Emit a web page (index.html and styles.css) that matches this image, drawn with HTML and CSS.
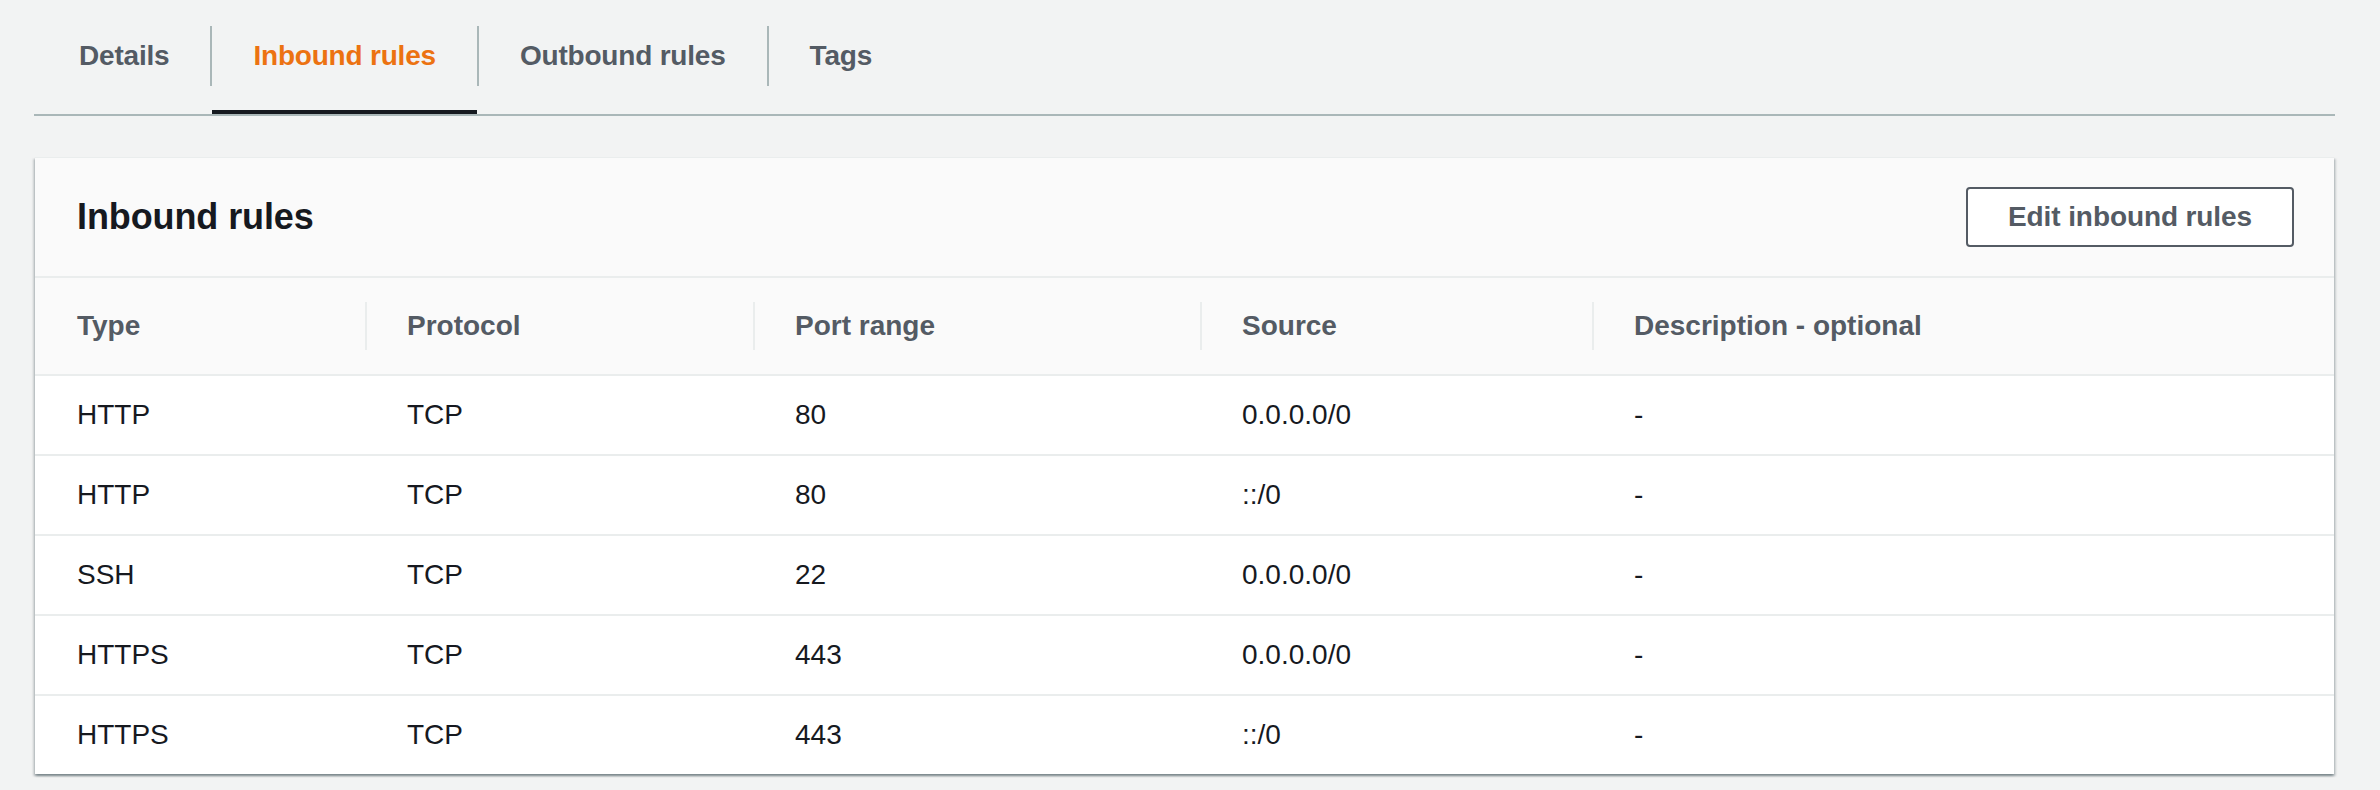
FILE: index.html
```html
<!DOCTYPE html>
<html lang="en">
<head>
<meta charset="utf-8">
<title>Inbound rules</title>
<link rel="stylesheet" href="styles.css">
</head>
<body>
<div class="page">
  <nav class="tabs">
    <div class="tab">Details</div>
    <span class="tab-sep"></span>
    <div class="tab active">Inbound rules</div>
    <span class="tab-sep"></span>
    <div class="tab">Outbound rules</div>
    <span class="tab-sep"></span>
    <div class="tab">Tags</div>
  </nav>

  <section class="panel">
    <header class="panel-head">
      <h2 class="panel-title">Inbound rules</h2>
      <button class="btn">Edit inbound rules</button>
    </header>
    <div class="table">
      <div class="row row-head">
        <div class="cell"><span class="col-label first">Type</span></div>
        <div class="cell"><span class="col-label">Protocol</span></div>
        <div class="cell"><span class="col-label">Port range</span></div>
        <div class="cell"><span class="col-label">Source</span></div>
        <div class="cell"><span class="col-label">Description - optional</span></div>
      </div>
      <div class="row">
        <div class="cell">HTTP</div><div class="cell">TCP</div><div class="cell">80</div><div class="cell">0.0.0.0/0</div><div class="cell">-</div>
      </div>
      <div class="row">
        <div class="cell">HTTP</div><div class="cell">TCP</div><div class="cell">80</div><div class="cell">::/0</div><div class="cell">-</div>
      </div>
      <div class="row">
        <div class="cell">SSH</div><div class="cell">TCP</div><div class="cell">22</div><div class="cell">0.0.0.0/0</div><div class="cell">-</div>
      </div>
      <div class="row">
        <div class="cell">HTTPS</div><div class="cell">TCP</div><div class="cell">443</div><div class="cell">0.0.0.0/0</div><div class="cell">-</div>
      </div>
      <div class="row">
        <div class="cell">HTTPS</div><div class="cell">TCP</div><div class="cell">443</div><div class="cell">::/0</div><div class="cell">-</div>
      </div>
    </div>
  </section>
</div>
</body>
</html>
```

FILE: styles.css
```css
* {
  box-sizing: border-box;
}

html, body {
  margin: 0;
  padding: 0;
  background: #f2f3f3;
}

body {
  font-family: "Liberation Sans", Arial, sans-serif;
  color: #16191f;
  width: 2380px;
  height: 790px;
  overflow: hidden;
}

.page {
  padding: 0 45px 0 34px;
}

/* Tabs */
.tabs {
  display: flex;
  align-items: flex-start;
  padding-top: 26px;
  border-bottom: 2px solid #aab7b8;
}

.tab {
  box-sizing: content-box;
  height: 60px;
  padding: 0 41px 24px;
  border-bottom: 4px solid transparent;
  display: flex;
  align-items: center;
  font-size: 28px;
  font-weight: 700;
  letter-spacing: -0.2px;
  color: #545b64;
  white-space: nowrap;
}

.tab:first-child {
  padding-left: 45px;
}

.tab.active {
  color: #ec7211;
  border-bottom-color: #16191f;
}

.tab-sep {
  flex: none;
  width: 2px;
  height: 60px;
  background: #aab7b8;
}

/* Panel */
.panel {
  margin: 41px 1px 0;
  background: #ffffff;
  border-top: 1px solid #eaeded;
  box-shadow: 0 2px 2px 0 rgba(0, 28, 36, 0.3),
              2px 2px 2px 0 rgba(0, 28, 36, 0.15),
              -2px 2px 2px 0 rgba(0, 28, 36, 0.15);
}

.panel-head {
  height: 120px;
  display: flex;
  align-items: center;
  justify-content: space-between;
  padding: 0 40px 0 42px;
  background: #fafafa;
  border-bottom: 2px solid #eaeded;
}

.panel-title {
  margin: 0;
  font-size: 36px;
  font-weight: 700;
  letter-spacing: -0.1px;
  color: #16191f;
}

.btn {
  height: 60px;
  padding: 0 40px;
  border: 2px solid #545b64;
  border-radius: 4px;
  background: #ffffff;
  font-family: "Liberation Sans", Arial, sans-serif;
  font-size: 28px;
  font-weight: 700;
  letter-spacing: -0.1px;
  color: #545b64;
}

/* Table */
.row {
  display: grid;
  grid-template-columns: 330px 388px 447px 392px 1fr;
  height: 80px;
  border-bottom: 2px solid #eaeded;
  background: #ffffff;
}

.row:last-child {
  border-bottom: none;
  height: 78px;
}

.row-head {
  height: 98px;
  background: #fafafa;
}

.cell {
  display: flex;
  align-items: center;
  padding-left: 42px;
  font-size: 28px;
  color: #16191f;
  white-space: nowrap;
}

.row-head .cell {
  padding-left: 0;
}

.col-label {
  display: flex;
  align-items: center;
  height: 48px;
  padding-left: 40px;
  border-left: 2px solid #eaeded;
  font-weight: 700;
  color: #545b64;
}

.col-label.first {
  border-left: none;
  padding-left: 42px;
}
```
